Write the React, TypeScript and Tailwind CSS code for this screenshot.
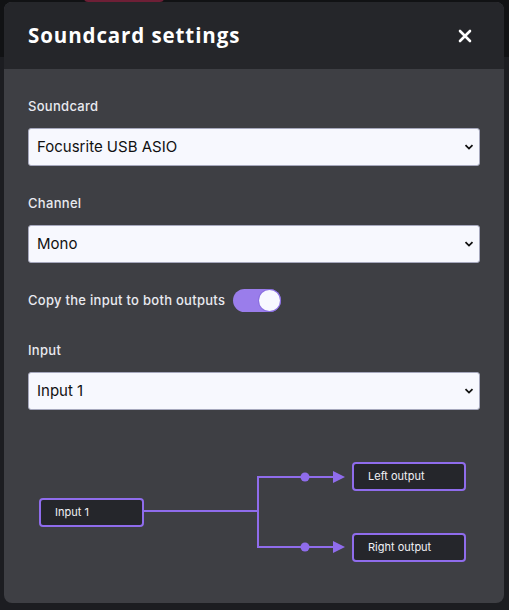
import { useState } from "react";

const selects = [
  { label: "Soundcard", value: "Focusrite USB ASIO", options: ["Focusrite USB ASIO", "ASIO4ALL v2", "Realtek ASIO"] },
  { label: "Channel", value: "Mono", options: ["Mono", "Stereo"] },
];

function Chevron() {
  return (
    <svg
      aria-hidden="true"
      viewBox="0 0 10 6"
      className="pointer-events-none absolute right-[6px] top-1/2 h-[6px] w-[10px] -translate-y-1/2"
    >
      <path d="M1.5 1.2 5 4.6 8.5 1.2" fill="none" stroke="#111" strokeWidth="1.8" />
    </svg>
  );
}

function SelectField({ label, value, options }: { label: string; value: string; options: string[] }) {
  const [current, setCurrent] = useState(value);
  return (
    <label className="flex flex-col">
      <span className="mb-3 text-[13px] font-medium leading-5 tracking-[0.3px] text-[#e9eaf0]">{label}</span>
      <div className="relative">
        <select
          value={current}
          onChange={(e) => setCurrent(e.target.value)}
          className="h-[38px] w-full appearance-none rounded-[3px] border border-[#a6a8bd] bg-[#f7f8fe] pl-2 text-[15px] text-[#111] outline-none"
        >
          {options.map((o) => (
            <option key={o}>{o}</option>
          ))}
        </select>
        <Chevron />
      </div>
    </label>
  );
}

function Toggle() {
  const [on, setOn] = useState(true);
  return (
    <button
      type="button"
      onClick={() => setOn(!on)}
      className={`flex h-[23px] w-[48px] items-center rounded-full px-[1px] ${on ? "justify-end bg-[#9a7deb]" : "justify-start bg-[#6b6c73]"}`}
    >
      <span className="h-[21px] w-[21px] rounded-full bg-[#f8f8ff] shadow-[0_0_0_1px_#8a6fe0]" />
    </button>
  );
}

function Node({ text, className }: { text: string; className: string }) {
  return (
    <div
      className={`absolute flex items-center rounded-[4px] border-2 border-[#8f6cec] bg-[#25262b] pl-[14px] text-[11px] text-[#f1f1f5] ${className}`}
    >
      {text}
    </div>
  );
}

// routing diagram: one input split to left and right outputs
function Routing() {
  const purple = "#8f6cec";
  return (
    <div className="relative h-[104px] w-full">
      <svg className="absolute inset-0" width="452" height="104" viewBox="0 0 452 104">
        <g stroke={purple} strokeWidth="2" fill="none">
          <path d="M115 51H230" />
          <path d="M230 17V87" />
          <path d="M229 17H306" />
          <path d="M229 87H306" />
        </g>
        <g fill={purple}>
          <circle cx="277" cy="17" r="4.5" />
          <circle cx="277" cy="87" r="4.5" />
          <path d="M305 11 317 17 305 23Z" />
          <path d="M305 81 317 87 305 93Z" />
        </g>
      </svg>
      <Node text="Input 1" className="left-[11px] top-[38px] h-[29px] w-[105px]" />
      <Node text="Left output" className="left-[324px] top-[2px] h-[29px] w-[114px]" />
      <Node text="Right output" className="left-[324px] top-[73px] h-[29px] w-[114px]" />
    </div>
  );
}

export default function App() {
  return (
    <div className="relative h-[610px] w-[509px] overflow-hidden bg-[#111214] font-['Inter',sans-serif]">
      {/* page behind the modal */}
      <div className="mt-[57px] h-[553px] bg-[#1c1d21]" />
      <span className="absolute left-[84px] top-[-6px] h-[8px] w-[80px] rounded-full bg-[#6e1f36]" />

      <div className="absolute left-[4px] top-[2px] flex h-[601px] w-[500px] flex-col overflow-hidden rounded-[8px] bg-[#3e3f44]">
        <header className="flex h-[67px] shrink-0 items-center justify-between bg-[#25262a] pl-6 pr-[32px]">
          <h1 className="font-['Open_Sans',sans-serif] text-[20.5px] font-bold tracking-[0.9px] text-white">
            Soundcard settings
          </h1>
          <button type="button" aria-label="Close">
            <svg viewBox="0 0 14 14" className="h-[14px] w-[14px]">
              <path d="M2 2 12 12M12 2 2 12" stroke="#fff" strokeWidth="2.6" strokeLinecap="round" />
            </svg>
          </button>
        </header>

        <div className="flex flex-col px-6 pt-[27px]">
          <SelectField {...selects[0]} />
          <div className="mt-[27px]">
            <SelectField {...selects[1]} />
          </div>
          <div className="mt-[26px] flex items-center gap-2">
            <span className="text-[13px] font-medium tracking-[0.28px] text-[#e9eaf0]">Copy the input to both outputs</span>
            <Toggle />
          </div>
          <div className="mt-[28px]">
            <SelectField label="Input" value="Input 1" options={["Input 1", "Input 2"]} />
          </div>
          <div className="mt-[50px]">
            <Routing />
          </div>
        </div>
      </div>
    </div>
  );
}
